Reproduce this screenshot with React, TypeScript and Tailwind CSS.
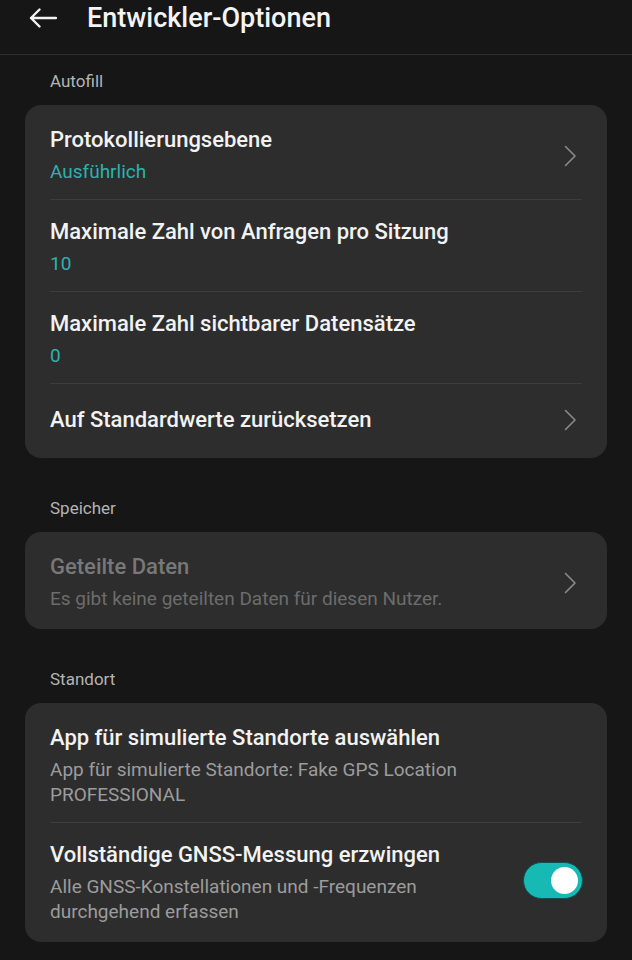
import React from "react";

const font = { fontFamily: "Roboto, 'Noto Sans', sans-serif" };

function Chevron() {
  return (
    <svg width="13" height="22" viewBox="0 0 13 22" className="shrink-0">
      <path d="M1.5 1.5 L11 11 L1.5 20.5" fill="none" stroke="#8a8a8a" strokeWidth="1.6" strokeLinecap="round" strokeLinejoin="round" />
    </svg>
  );
}

function Divider() {
  return <div className="mx-[25px] h-px bg-[#3e3e3e]" />;
}

function Row({
  title,
  sub,
  subLines,
  teal,
  chevron,
  disabled,
  toggle,
}: {
  title: string;
  sub?: string;
  subLines?: string[];
  teal?: boolean;
  chevron?: boolean;
  disabled?: boolean;
  toggle?: boolean;
}) {
  const lines = subLines ?? (sub ? [sub] : []);
  return (
    <div className={`flex items-center pl-[25px] pr-[24px] ${lines.length ? "pt-[19px] pb-[15px]" : "pt-[23px] pb-[22px]"}`}>
      <div className="flex-1 min-w-0">
        <div className={`text-[22px] leading-[26px] font-medium ${disabled ? "text-[#787878]" : "text-[#f2f2f2]"}`}>{title}</div>
        {lines.length > 0 && (
          <div className="mt-[6px]">
            {lines.map((l, i) => (
              <div
                key={i}
                className={`text-[19px] leading-[25px] ${teal ? "text-[#2bb3ad]" : disabled ? "text-[#6c6c6c]" : "text-[#9c9c9c]"}`}
              >
                {l}
              </div>
            ))}
          </div>
        )}
      </div>
      {chevron && (
        <div className="pr-[6px]">
          <Chevron />
        </div>
      )}
      {toggle && (
        <div className="relative self-start mt-[20px] w-[60px] h-[37px] rounded-full bg-[#17b9b5] border border-[#0f4f4d] shrink-0">
          <div className="absolute right-[4px] top-[4px] w-[27px] h-[27px] rounded-full bg-white" />
        </div>
      )}
    </div>
  );
}

function Card({ children }: { children: React.ReactNode }) {
  return <div className="mx-[25px] rounded-[16px] bg-[#2d2d2d] py-[3px]">{children}</div>;
}

function Section({ label, first }: { label: string; first?: boolean }) {
  return (
    <div className={`px-[50px] ${first ? "pt-[14px] pb-[12px]" : "pt-[38px] pb-[12px]"} text-[17px] leading-[24px] text-[#b4b4b4]`}>
      {label}
    </div>
  );
}

export default function App() {
  return (
    <div className="w-[632px] h-[960px] bg-[#161616] overflow-hidden" style={font}>
      <div className="h-[55px] flex items-start border-b border-[#2e2e2e]">
        <div className="pl-[29px] pt-[8px] w-[87px]">
          <svg width="28" height="20" viewBox="0 0 28 20">
            <path d="M27 10 H2 M10.5 1.5 L2 10 L10.5 18.5" fill="none" stroke="#f2f2f2" strokeWidth="2.4" strokeLinecap="round" strokeLinejoin="round" />
          </svg>
        </div>
        <div className="text-[27px] leading-[36px] text-[#f4f4f4] font-medium">Entwickler-Optionen</div>
      </div>

      <Section label="Autofill" first />
      <Card>
        <Row title="Protokollierungsebene" sub="Ausführlich" teal chevron />
        <Divider />
        <Row title="Maximale Zahl von Anfragen pro Sitzung" sub="10" teal />
        <Divider />
        <Row title="Maximale Zahl sichtbarer Datensätze" sub="0" teal />
        <Divider />
        <Row title="Auf Standardwerte zurücksetzen" chevron />
      </Card>

      <Section label="Speicher" />
      <Card>
        <Row title="Geteilte Daten" sub="Es gibt keine geteilten Daten für diesen Nutzer." disabled chevron />
      </Card>

      <Section label="Standort" />
      <Card>
        <Row
          title="App für simulierte Standorte auswählen"
          subLines={["App für simulierte Standorte: Fake GPS Location", "PROFESSIONAL"]}
        />
        <Divider />
        <Row
          title="Vollständige GNSS-Messung erzwingen"
          subLines={["Alle GNSS-Konstellationen und -Frequenzen", "durchgehend erfassen"]}
          toggle
        />
      </Card>
    </div>
  );
}
